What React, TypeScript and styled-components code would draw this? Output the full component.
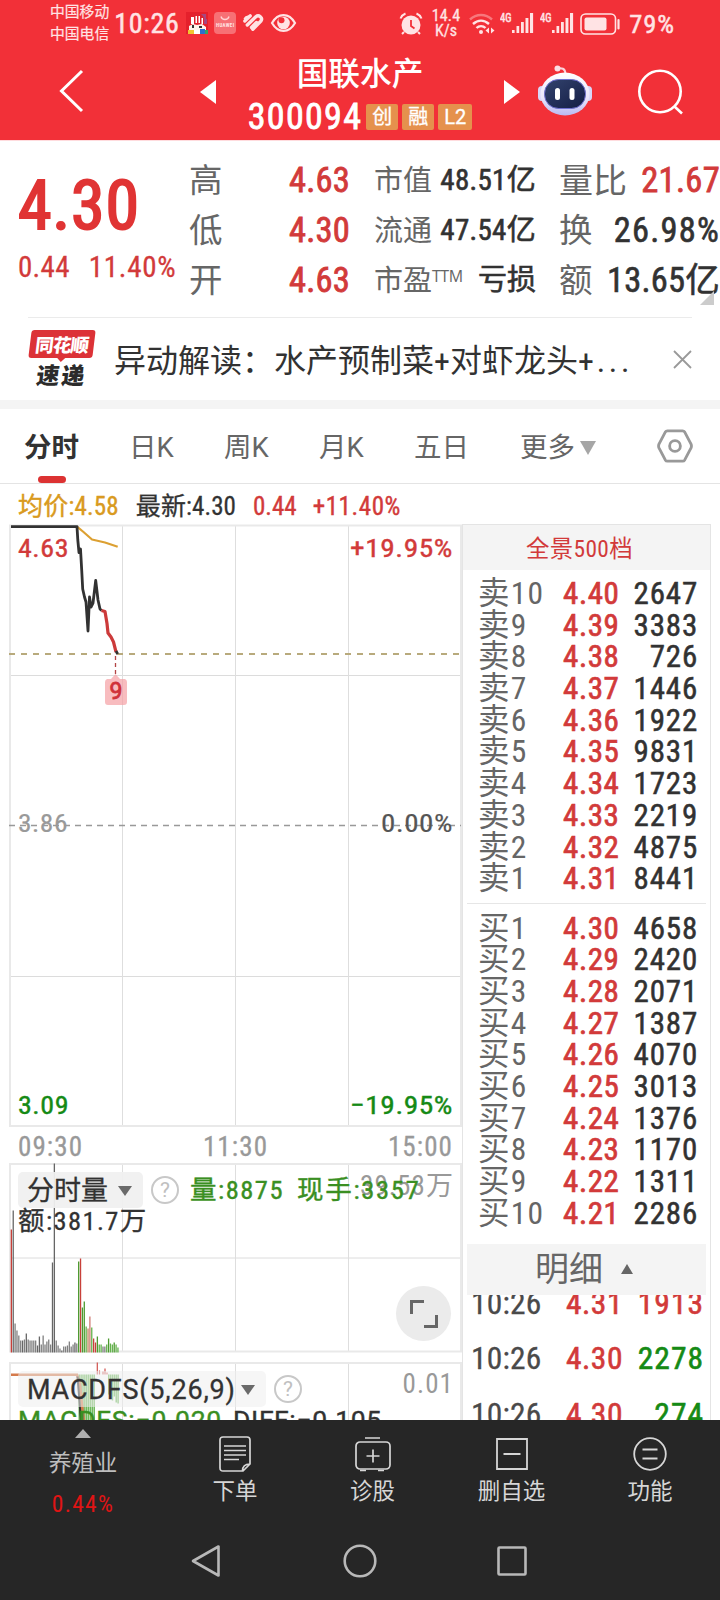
import React from 'react';
import styled, { createGlobalStyle } from 'styled-components';

const RED = '#d23a3a';
const INK = '#323232';
const GREY = '#666';
const GREEN = '#158a15';
const LINE = '#e9e9e9';

const Global = createGlobalStyle`
  * { box-sizing: border-box; }
  html, body { margin: 0; padding: 0; background: #fff; }
  body {
    width: 720px; height: 1600px; overflow: hidden;
    font-family: 'Roboto Condensed', Roboto, 'Noto Sans CJK SC', sans-serif;
    color: ${INK};
  }
  svg { display: block; flex: none; }
`;

type TxtProps = { $s: number; $c?: string; $lh?: number; $ls?: number; $b?: number; $w?: number };
const Txt = styled.span<TxtProps>`
  display: block;
  white-space: nowrap;
  font-size: ${p => p.$s}px;
  line-height: ${p => (p.$lh ? `${p.$lh}px` : '1.3')};
  letter-spacing: ${p => p.$ls ?? 0}px;
  font-weight: ${p => p.$w ?? 400};
  color: ${p => p.$c ?? INK};
  -webkit-text-stroke: ${p => p.$b ?? 0}px currentColor;
`;

const Screen = styled.div`
  width: 720px;
  height: 1600px;
  display: flex;
  flex-direction: column;
  overflow: hidden;
  background: #fff;
`;

/* ---------- header ---------- */
const Header = styled.header`
  height: 140px;
  background: #f23038;
  flex: none;
`;
const StatusBar = styled.div`
  height: 47px;
  display: flex;
  justify-content: space-between;
  padding: 0 45px 0 50px;
`;
const StatusGroup = styled.div`
  display: flex;
  align-items: center;
  height: 47px;
`;
const Stack = styled.div`
  display: flex;
  flex-direction: column;
  align-items: center;
  padding-bottom: 1px;
`;
const Gap = styled.i<{ $w: number }>`
  width: ${p => p.$w}px;
  flex: none;
`;
const TitleBar = styled.div`
  height: 93px;
  display: flex;
`;
const NavCell = styled.div<{ $w: number; $l?: number; $t: number }>`
  width: ${p => p.$w}px;
  padding: ${p => p.$t}px 0 0 ${p => p.$l ?? 0}px;
  flex: none;
`;
const TitleBlock = styled.div`
  width: 240px;
  padding-top: 7px;
  display: flex;
  flex-direction: column;
  align-items: center;
`;
const CodeRow = styled.div`
  display: flex;
  align-items: center;
  gap: 4px;
`;
const Tag = styled.span<{ $w: number }>`
  width: ${p => p.$w}px;
  height: 26px;
  border-radius: 2px;
  background: #e5914d;
  color: #fff;
  font: 400 20px/26px Roboto, 'Noto Sans CJK SC', sans-serif;
  -webkit-text-stroke: 0.3px currentColor;
  text-align: center;
`;

/* ---------- quote ---------- */
const Quote = styled.section`
  position: relative;
  height: 177px;
  border-top: 1px solid #ffdcde;
  display: flex;
  flex: none;
`;
const LastPrice = styled.div`
  width: 189px;
  padding: 26px 0 0 18px;
`;
const Changes = styled.div`
  display: flex;
  gap: 19px;
`;
const QuoteCol = styled.div<{ $ml: number; $w: number }>`
  width: ${p => p.$w}px;
  margin-left: ${p => p.$ml}px;
  padding-top: 13.5px;
`;
const QuoteRow = styled.div`
  display: flex;
  justify-content: space-between;
  height: 50px;
`;
const Sup = styled.sup`
  font: 400 16px/1 'Open Sans', sans-serif;
  letter-spacing: -0.5px;
  vertical-align: 9px;
`;
const Corner = styled.i`
  position: absolute;
  right: 6px;
  bottom: 12px;
  border: 7px solid transparent;
  border-right-color: #ccc;
  border-bottom-color: #ccc;
`;

/* ---------- news ---------- */
const News = styled.section`
  height: 83px;
  margin: 0 28px;
  border-top: 1px solid #ebebeb;
  display: flex;
  align-items: center;
  flex: none;
`;
const NewsLogo = styled.div`
  width: 68px;
  height: 58px;
  display: flex;
  flex-direction: column;
  align-items: center;
  margin-right: 18px;
`;
const LogoTop = styled.div`
  position: relative;
  width: 64px;
  height: 28px;
  border-radius: 3px;
  background: #dc3237;
  transform: skewX(-7deg);
  color: #fff;
  font: 900 18.5px/28px 'Noto Sans CJK SC', sans-serif;
  letter-spacing: -0.8px;
  text-align: center;
  white-space: nowrap;
  &::after {
    content: '';
    position: absolute;
    left: 28px;
    top: 27px;
    border: 5px solid transparent;
    border-top-color: #dc3237;
    border-bottom: 0;
  }
`;
const LogoBottom = styled.div`
  transform: skewX(-7deg);
  font: 900 23px/26px 'Noto Sans CJK SC', sans-serif;
  letter-spacing: 2px;
  padding-top: 3px;
  color: #2b2b2b;
`;
const Headline = styled.span`
  padding-top: 3px;
  font-size: 32px;
  line-height: 60px;
  white-space: nowrap;
`;
const Ellipsis = styled.span`
  font-size: 32px;
  letter-spacing: 3.6px;
  margin-left: 3px;
`;
const Grow = styled.i`
  flex: 1;
`;
const Band = styled.div`
  height: 9px;
  background: #f4f4f4;
  flex: none;
`;

/* ---------- tabs ---------- */
const Tabs = styled.nav`
  height: 75px;
  border-bottom: 1px solid #e4e4e4;
  display: flex;
  flex: none;
  padding-left: 24px;
`;
const Tab = styled.div<{ $w: number; $on?: boolean }>`
  position: relative;
  width: ${p => p.$w}px;
  font-family: Roboto, 'Noto Sans CJK SC', sans-serif;
  font-size: 27.5px;
  line-height: 78px;
  white-space: nowrap;
  color: ${p => (p.$on ? INK : GREY)};
  font-weight: ${p => (p.$on ? 700 : 400)};
  display: flex;
  align-items: center;
  height: 78px;
  gap: 5px;
  &::after {
    content: '';
    display: ${p => (p.$on ? 'block' : 'none')};
    position: absolute;
    left: 14px;
    top: 67px;
    width: 28px;
    height: 7px;
    border-radius: 4px;
    background: #dc3232;
  }
`;
const SettingsCell = styled.div`
  height: 74px;
  display: flex;
  align-items: center;
`;
const Caret = styled.i<{ $w: number; $h: number; $c: string; $up?: boolean }>`
  width: 0;
  height: 0;
  flex: none;
  border-left: ${p => p.$w / 2}px solid transparent;
  border-right: ${p => p.$w / 2}px solid transparent;
  border-${p => (p.$up ? 'bottom' : 'top')}: ${p => p.$h}px solid ${p => p.$c};
`;
const InfoLine = styled.div`
  height: 40px;
  padding: 7px 0 0 18px;
  display: flex;
  align-items: center;
  flex: none;
`;

/* ---------- body ---------- */
const Body = styled.main`
  height: 896px;
  display: flex;
  overflow: hidden;
  flex: none;
`;
const ChartCol = styled.div`
  width: 462px;
  padding-left: 9px;
  flex: none;
`;
const Axis = styled.div`
  height: 36px;
  padding: 3px 9px 0 9px;
  display: flex;
  justify-content: space-between;
`;
const Panel = styled.div<{ $h: number; $mb?: number }>`
  position: relative;
  height: ${p => p.$h}px;
  margin-bottom: ${p => p.$mb ?? 0}px;
`;
const Legend = styled.div`
  position: absolute;
  left: 9px;
  top: 9px;
  width: 438px;
`;
const LegendRow = styled.div<{ $h: number }>`
  height: ${p => p.$h}px;
  display: flex;
  align-items: center;
`;
const Chip = styled.div<{ $w: number; $bg: string; $ls?: number }>`
  width: ${p => p.$w}px;
  height: 36px;
  border-radius: 5px;
  background: ${p => p.$bg};
  display: flex;
  align-items: center;
  justify-content: space-between;
  padding: 2px 11px 0 9px;
  flex: none;
  font: 400 27px/34px Roboto, 'Noto Sans CJK SC', sans-serif;
  letter-spacing: ${p => p.$ls ?? 0}px;
  white-space: nowrap;
  -webkit-text-stroke: 0.3px currentColor;
`;
const Help = styled.span`
  width: 28px;
  height: 28px;
  margin: 0 0 0 8px;
  border: 2px solid #c8c8c8;
  border-radius: 50%;
  color: #c0c0c0;
  font: 400 21px/25px Roboto, sans-serif;
  text-align: center;
  flex: none;
`;
const PanelMax = styled.span<{ $t: number }>`
  position: absolute;
  right: 8px;
  top: ${p => p.$t}px;
  font-size: 27px;
  line-height: 32px;
  letter-spacing: 1.1px;
  color: #999;
`;
const WideTxt = styled.span<{ $c: string; $ls: number }>`
  font: 400 26.5px/26px Roboto, sans-serif;
  color: ${p => p.$c};
  letter-spacing: ${p => p.$ls}px;
  white-space: nowrap;
  -webkit-text-stroke: 0.4px currentColor;
`;
const Expand = styled.div`
  position: absolute;
  right: 11px;
  bottom: 11px;
  width: 55px;
  height: 55px;
  border-radius: 50%;
  background: #ebebeb;
  display: flex;
  align-items: center;
  justify-content: center;
`;

/* ---------- order book ---------- */
const Book = styled.aside`
  width: 249px;
  border: 1px solid #e4e4e4;
  border-bottom: 0;
  display: flex;
  flex-direction: column;
  overflow: hidden;
`;
const BookHead = styled.div`
  height: 45px;
  background: #f4f4f4;
  flex: none;
  text-align: center;
  padding: 1px 14px 0 0;
`;
const BookSide = styled.div<{ $mt: number }>`
  margin-top: ${p => p.$mt}px;
  height: 317px;
  display: flex;
  flex-direction: column;
  flex: none;
`;
const BookRow = styled.div`
  height: 31.7px;
  display: grid;
  grid-template-columns: 85px 62px 1fr;
  padding: 0 12px 0 15px;
`;
const Rule = styled.div`
  height: 1px;
  margin: 8px 4px 0;
  background: #e6e6e6;
  flex: none;
`;
const DetailHead = styled.div`
  height: 51px;
  margin: 14px 4px 0;
  background: #f4f4f4;
  display: flex;
  align-items: center;
  justify-content: center;
  gap: 18px;
  flex: none;
  padding-right: 5px;
`;
const Ticks = styled.div`
  height: 127px;
  overflow: hidden;
  display: flex;
  flex-direction: column;
`;
const Tick = styled.div<{ $first?: boolean }>`
  height: 55.5px;
  flex: none;
  margin-top: ${p => (p.$first ? -19 : 0)}px;
  display: grid;
  grid-template-columns: 95px 60px 1fr;
  padding: 0 6px 0 8px;
`;
const Right = styled.div`
  display: flex;
  justify-content: flex-end;
`;

/* ---------- bottom ---------- */
const Bottom = styled.footer`
  height: 180px;
  background: #262626;
  flex: none;
`;
const Menu = styled.div`
  display: grid;
  grid-template-columns: 166px 138px 137px 141px 136px;
  height: 102px;
`;
const MenuItem = styled.div<{ $t: number }>`
  display: flex;
  flex-direction: column;
  align-items: center;
  padding-top: ${p => p.$t}px;
`;
const IconSlot = styled.div`
  height: 37px;
  display: flex;
  align-items: center;
  margin-bottom: 4px;
`;
const SystemNav = styled.div`
  height: 78px;
  display: flex;
  align-items: center;
  padding: 0 0 0 190px;
  gap: 120.5px;
`;

const P = '#ffe3e4';

const Signal = () => (
  <svg width="34" height="24" viewBox="0 0 34 24" fill={P}>
    <text x="0" y="10" fontSize="12" textLength="11.5" lengthAdjust="spacingAndGlyphs" stroke={P} strokeWidth=".5">4G</text>
    <rect x="12" y="18" width="2.600" height="3" /><rect x="16.500" y="14" width="2.700" height="7" />
    <rect x="21" y="10" width="2.800" height="11" /><rect x="25.500" y="6" width="2.900" height="15" />
    <rect x="30" y="1" width="3.100" height="20" />
  </svg>
);

const StatusIcons = () => (
  <svg width="112" height="26" viewBox="185 11 112 26">
    <rect x="186" y="12" width="22" height="22" fill="#e5202c" />
    <path d="M201 14h5v5h-3zM204 19h3v5h-3z" fill="#a8467f" />
    <path d="M189 19q1-5 7-6 6 0 8 5l-1 7h-12z" fill="#e2222e" />
    <path d="M191 17h3v7h-3zM195.500 16h1.500v7h-1.500zM198.500 16h1.500v7h-1.500zM201.500 18h1.500v6h-1.500z" fill="#fff" />
    <path d="M189 26l4-2 4 1 5-1 4 3v3l-8 1-9-1z" fill="#fff4ec" />
    <path d="M192 25h2v3h-2zM199 26h3v2h-3z" fill="#333" />
    <rect x="188" y="30" width="6" height="4" fill="#f1c431" /><rect x="200" y="29" width="5" height="5" fill="#2c70cc" />
    <rect x="194" y="30" width="6" height="4" fill="#fff" /><rect x="205" y="30" width="3" height="4" fill="#35a363" />
    <rect x="214" y="12" width="22" height="22" rx="4" fill="#f77075" />
    <path d="M221 16.500c1 4 7 4 8 0" fill="none" stroke="#ffd5d6" strokeWidth="1.300" />
    <text x="216" y="26.500" fontSize="5" fontWeight="700" fill="#ffe3e4" textLength="18">HUAWEI</text>
    <g fill="none" stroke={P} strokeWidth="3.400" strokeLinecap="round">
      <path d="M244.800 21l5.500-5.200" /><path d="M247.300 25l8.500-8.300c3-2.500 7.500 1 5 4.500l-8 8" />
      <path d="M251.500 27.500l5-5" />
    </g>
    <path d="M243.500 18.500q2.500-4 6.500-2.500l-4 5z" fill={P} />
    <path d="M272 23c6-10.500 17-10.500 23 0c-6 10.500-17 10.500-23 0z" fill="none" stroke={P} strokeWidth="2.200" />
    <circle cx="283.500" cy="23" r="6.300" fill={P} /><circle cx="281.500" cy="20.300" r="3" fill="#f23038" />
  </svg>
);

const Alarm = () => (
  <svg width="24" height="24" viewBox="0 0 24 24">
    <circle cx="12" cy="13" r="9.500" fill={P} />
    <path d="M1.500 6.500c1-2.500 2.500-4 5-5M22.500 6.500c-1-2.500-2.500-4-5-5M5 20l-2 2M19 20l2 2" stroke={P} strokeWidth="2" fill="none" />
    <path d="M12 8v6l3.500 2.500" fill="none" stroke="#f23038" strokeWidth="1.800" />
  </svg>
);

const Wifi = () => (
  <svg width="26" height="22" viewBox="0 0 26 22" fill="none" stroke={P} strokeWidth="2.400">
    <path d="M1 6.500c6.500-6 15.500-6 22 0" opacity=".4" />
    <path d="M4 11c5-4.500 11-4.500 16 0" /><path d="M7.500 15c2.500-2.500 6.500-2.500 9 0" />
    <circle cx="12" cy="19" r="2" fill={P} stroke="none" />
    <path d="M20 14.500v6l-3.500-3zM22 14.500v6l3.500-3z" fill={P} stroke="none" />
  </svg>
);

const Battery = () => (
  <svg width="42" height="22" viewBox="0 0 42 22">
    <rect x="1" y="1" width="34.500" height="20" rx="4.500" fill="none" stroke={P} strokeWidth="1.600" />
    <rect x="4.500" y="4.500" width="22" height="13" rx="2" fill={P} />
    <path d="M38.500 7v8.500" stroke={P} strokeWidth="2.200" strokeLinecap="round" />
  </svg>
);

const Robot = () => (
  <svg width="56" height="52" viewBox="537 64 56 52">
    <defs>
      <linearGradient id="shell" x1="0" y1="0" x2="0" y2="1">
        <stop offset="0" stopColor="#fff" /><stop offset=".6" stopColor="#e9e4fa" /><stop offset="1" stopColor="#b9b9f2" />
      </linearGradient>
      <linearGradient id="visor" x1="0" y1="0" x2="1" y2="1">
        <stop offset="0" stopColor="#33436e" /><stop offset="1" stopColor="#141d44" />
      </linearGradient>
    </defs>
    <path d="M557 68.500c5-1 8 0 8.500 5" fill="none" stroke="#fbd3dc" strokeWidth="2" />
    <circle cx="557.500" cy="68.500" r="3" fill="#fbdde3" />
    <rect x="538" y="86" width="8" height="15" rx="4" fill="#d8d6f8" /><rect x="584" y="86" width="8" height="15" rx="4" fill="#d8d6f8" />
    <ellipse cx="565" cy="94" rx="24.500" ry="21.500" fill="url(#shell)" />
    <rect x="544.500" y="79.500" width="41" height="29" rx="14" fill="url(#visor)" stroke="#6f6fd0" strokeWidth="1" />
    <rect x="555" y="88" width="5" height="12" rx="2.500" fill="#fff" /><rect x="569.500" y="88" width="5" height="12" rx="2.500" fill="#fff" />
  </svg>
);

const Grid = ({ top, bottom, mids }: { top: number; bottom: number; mids: number[] }) => (
  <g fill="none">
    {mids.map(y => <path key={y} d={`M10 ${y}H461`} stroke="#dcdcdc" strokeWidth="1" />)}
    {[122.5, 235.5, 348.5].map(x => <path key={x} d={`M${x} ${top}V${bottom}`} stroke="#dedede" strokeWidth="1" />)}
    <rect x="10" y={top} width="451" height={bottom - top} stroke={LINE} strokeWidth="2" />
  </g>
);

type LabelProps = { x: number; y: number; w: number; c: string; b?: number; children: string };
const Label = ({ x, y, w, c, b = 0.4, children }: LabelProps) => (
  <text x={x} y={y} textLength={w} lengthAdjust="spacingAndGlyphs" fill={c} stroke={c} strokeWidth={b} fontSize="26.5" letterSpacing=".5">
    {children}
  </text>
);

const PriceChart = () => (
  <svg width="453" height="603" viewBox="9 524 453 603">
    <Grid top={525.5} bottom={1126} mids={[675.5, 976.5]} />
    <path d="M9 654H461" stroke="#b8aa7c" strokeWidth="2" strokeDasharray="6 6" />
    <path d="M9 825.500H461" stroke="#999" strokeWidth="1.600" strokeDasharray="6 5" />
    <path d="M115.500 656V676" stroke="#b34545" strokeWidth="1.300" strokeDasharray="4 3" />
    <path d="M107 679h4l4.500-5 4.500 5h5q2 1 2 3v20q0 3-3 3h-16q-3 0-3-3v-20q0-2 2-3z" fill="#f5a0a4" fillOpacity=".7" />
    <g fill="none" strokeWidth="2.800" strokeLinejoin="round">
      <path d="M77 526.700L83.500 532 92 539.500 105 542.500 117.700 546.700" stroke="#dca032" strokeWidth="2.200" />
      <path d="M11 526.700H77L77.800 540 79 552.500 80.500 549 81.700 570 82.700 589 84.500 597 86 602 88 631 89.500 597 91 607 93 603 95.700 580.500 98 600 100 609 101.500 610.500" stroke={INK} />
      <path d="M101.500 610.500L105 611.500 107 623.500 108 633 111 637 113.500 642 116 652" stroke="#cc3a3a" strokeWidth="3.200" />
      <path d="M116 651l1.700 3" stroke={INK} />
    </g>
    <Label x={18} y={557} w={51} c={RED}>4.63</Label>
    <Label x={350} y={557} w={103} c={RED}>+19.95%</Label>
    <Label x={18} y={832} w={50} c="#999" b={0.2}>3.86</Label>
    <Label x={381} y={832} w={72} c="#555" b={0.2}>0.00%</Label>
    <Label x={18} y={1114} w={51} c={GREEN}>3.09</Label>
    <Label x={350} y={1114} w={103} c={GREEN}>−19.95%</Label>
    <text x="109.500" y="699" fontSize="23" fontFamily="Roboto" fill="#d03038" stroke="#d03038" strokeWidth=".8">9</text>
  </svg>
);

const K = '#808080', D = '#666', G = '#4c9a2f', L = '#63b24c', R = '#c8403a', B = '#c08a5c';
const volume: [number, string][] = [
  [123, R], [142, D], [29, K], [22, K], [17, K], [12, K], [12, D], [13, K], [19, D], [13, K], [12, K], [12, K], [12, K], [12, K],
  [7, D], [16, D], [8, K], [17, K], [8, K], [11, K], [13, K], [8, K], [90, D], [189, D], [12, K], [7, K], [4, K], [2, D], [6, K], [6, K],
  [7, K], [11, K], [6, K], [8, K], [10, D], [9, K], [91, G], [94, R], [45, G], [51, G], [26, L], [24, B], [36, '#d07a72'], [25, L],
  [14, R], [10, R], [16, G], [8, L], [8, L], [6, K], [6, K], [8, L], [14, G], [9, L], [8, L], [10, G], [8, L], [5, L],
];

const VolumeChart = () => (
  <svg width="453" height="190" viewBox="9 1162.500 453 190">
    <Grid top={1163.5} bottom={1351} mids={[1257.5]} />
    {volume.map(([h, c], i) => (
      <rect key={i} x={10.7 + i * 1.87} y={1352 - h} width="1.300" height={h} fill={c} />
    ))}
  </svg>
);

const MacdChart = () => (
  <svg width="453" height="60" viewBox="9 1361.500 453 60">
    <Grid top={1362.5} bottom={1440} mids={[]} />
    {Array.from({ length: 9 }, (_, i) => (
      <rect key={i} x={78.5 + i * 1.87} y="1374" width="1.500" height="50" fill="#6db95b" />
    ))}
    {[20, 20, 26, 22, 28, 29].map((h, i) => (
      <rect key={i} x={108 + i * 1.87} y="1374" width="1.500" height={h} fill="#6db95b" />
    ))}
    <path d="M97.300 1362v12M99.500 1370v4M103 1371v3M105 1368v6M107 1372v2" stroke="#d0504c" strokeWidth="1.200" />
    <path d="M11 1374.300H77L80 1384 82 1405 84 1421" fill="none" stroke="#d57b4c" strokeWidth="2.600" />
    <path d="M77.500 1376L79 1395 81 1421" fill="none" stroke={INK} strokeWidth="2" />
  </svg>
);

const sells = [2647, 3383, 726, 1446, 1922, 9831, 1723, 2219, 4875, 8441];
const buys = [4658, 2420, 2071, 1387, 4070, 3013, 1376, 1170, 1311, 2286];

const Level = ({ label, price, vol }: { label: string; price: string; vol: number }) => (
  <BookRow>
    <Txt $s={31.5} $lh={31.7} $c={GREY} $ls={1.2}>{label}</Txt>
    <Txt $s={31} $lh={31.7} $c={RED} $b={0.7} $ls={0.6}>{price}</Txt>
    <Right><Txt $s={31} $lh={31.7} $b={0.5} $ls={0.8}>{vol}</Txt></Right>
  </BookRow>
);

const ticks = [
  { time: '10:26', price: '4.31', vol: '1913', c: RED },
  { time: '10:26', price: '4.30', vol: '2278', c: GREEN },
  { time: '10:26', price: '4.30', vol: '274', c: GREEN },
];

const M = '#d6d6d6';

export default function App() {
  return (
    <Screen>
      <Global />
      <Header>
        <StatusBar>
          <StatusGroup>
            <Stack>
              <Txt $s={14.8} $lh={22} $c={P} $b={0.2}>中国移动</Txt>
              <Txt $s={14.8} $lh={22} $c={P} $b={0.2}>中国电信</Txt>
            </Stack>
            <Gap $w={5} />
            <Txt $s={28} $lh={47} $c={P} $ls={0.7} $b={0.5}>10:26</Txt>
            <Gap $w={5} />
            <StatusIcons />
          </StatusGroup>
          <StatusGroup>
            <Alarm />
            <Gap $w={9} />
            <Stack>
              <Txt $s={16} $lh={15} $c={P} $b={0.3} $ls={0.2}>14.4</Txt>
              <Txt $s={16} $lh={15} $c={P} $b={0.3}>K/s</Txt>
            </Stack>
            <Gap $w={9} />
            <Wifi />
            <Gap $w={5} />
            <Signal />
            <Gap $w={6} />
            <Signal />
            <Gap $w={6} />
            <Battery />
            <Gap $w={7} />
            <Txt $s={26.5} $lh={47} $c={P} $ls={0.9} $b={0.5}>79%</Txt>
          </StatusGroup>
        </StatusBar>
        <TitleBar>
          <NavCell $w={200} $l={58} $t={22}>
            <svg width="26" height="44" viewBox="0 0 26 44" fill="none" stroke="#fff" strokeWidth="3"><path d="M24 2L3.500 22 24 42" /></svg>
          </NavCell>
          <NavCell $w={40} $t={33}>
            <svg width="16" height="24" viewBox="0 0 16 24" fill="#fff"><path d="M16 0v24L0 12z" /></svg>
          </NavCell>
          <TitleBlock>
            <Txt $s={31.7} $lh={42} $c="#fff" $w={500}>国联水产</Txt>
            <CodeRow>
              <Txt $s={36} $lh={42} $c="#fff" $ls={1.3} $b={0.8}>300094</Txt>
              <Tag $w={32}>创</Tag>
              <Tag $w={32}>融</Tag>
              <Tag $w={34}>L2</Tag>
            </CodeRow>
          </TitleBlock>
          <NavCell $w={57} $l={24} $t={33}>
            <svg width="16" height="24" viewBox="0 0 16 24" fill="#fff"><path d="M0 0v24L16 12z" /></svg>
          </NavCell>
          <NavCell $w={100} $t={17}><Robot /></NavCell>
          <NavCell $w={60} $t={22}>
            <svg width="48" height="46" viewBox="0 0 48 46" fill="none" stroke="#fff" strokeWidth="2.600"><circle cx="23" cy="22.500" r="20.700" /><path d="M37.500 37.500l7.500 7" /></svg>
          </NavCell>
        </TitleBar>
      </Header>

      <Quote>
        <LastPrice>
          <Txt $s={68} $lh={79} $c="#e03434" $b={2} $ls={0.8}>4.30</Txt>
          <Changes>
            <Txt $s={29} $lh={42} $c={RED} $b={0.3} $ls={0.3}>0.44</Txt>
            <Txt $s={29} $lh={42} $c={RED} $b={0.3} $ls={0.7}>11.40%</Txt>
          </Changes>
        </LastPrice>
        <QuoteCol $ml={0} $w={161}>
          {[['高', '4.63'], ['低', '4.30'], ['开', '4.63']].map(([k, v]) => (
            <QuoteRow key={k}>
              <Txt $s={33.5} $lh={52} $c={GREY}>{k}</Txt>
              <Txt $s={34.5} $lh={50} $c={RED} $b={0.8} $ls={0.2}>{v}</Txt>
            </QuoteRow>
          ))}
        </QuoteCol>
        <QuoteCol $ml={24} $w={162}>
          <QuoteRow>
            <Txt $s={29} $lh={52} $c={GREY}>市值</Txt>
            <Txt $s={29} $lh={50} $b={0.6} $ls={0.3}>48.51亿</Txt>
          </QuoteRow>
          <QuoteRow>
            <Txt $s={29} $lh={52} $c={GREY}>流通</Txt>
            <Txt $s={29} $lh={50} $b={0.6} $ls={0.3}>47.54亿</Txt>
          </QuoteRow>
          <QuoteRow>
            <Txt $s={29} $lh={52} $c={GREY}>市盈<Sup>TTM</Sup></Txt>
            <Txt $s={29} $lh={51} $b={0.6}>亏损</Txt>
          </QuoteRow>
        </QuoteCol>
        <QuoteCol $ml={23} $w={161}>
          <QuoteRow>
            <Txt $s={34} $lh={52} $c={GREY}>量比</Txt>
            <Txt $s={34.5} $lh={50} $c={RED} $b={0.8} $ls={0.3}>21.67</Txt>
          </QuoteRow>
          <QuoteRow>
            <Txt $s={33.5} $lh={52} $c={GREY}>换</Txt>
            <Txt $s={34.5} $lh={50} $b={0.6} $ls={1.2}>26.98%</Txt>
          </QuoteRow>
          <QuoteRow>
            <Txt $s={33.5} $lh={52} $c={GREY}>额</Txt>
            <Txt $s={34.5} $lh={50} $b={0.6} $ls={0.2}>13.65亿</Txt>
          </QuoteRow>
        </QuoteCol>
        <Corner />
      </Quote>

      <News>
        <NewsLogo>
          <LogoTop>同花顺</LogoTop>
          <LogoBottom>速递</LogoBottom>
        </NewsLogo>
        <Headline>异动解读：水产预制菜+对虾龙头+<Ellipsis>...</Ellipsis></Headline>
        <Grow />
        <svg width="19" height="19" viewBox="0 0 19 19" stroke="#999" strokeWidth="1.800"><path d="M1 1l17 17M18 1L1 18" /></svg>
      </News>
      <Band />

      <Tabs>
        <Tab $w={105} $on>分时</Tab>
        <Tab $w={95}>日K</Tab>
        <Tab $w={95}>周K</Tab>
        <Tab $w={95}>月K</Tab>
        <Tab $w={106}>五日</Tab>
        <Tab $w={137}>更多<Caret $w={17} $h={14} $c="#a6a6a6" /></Tab>
        <SettingsCell>
          <svg width="36" height="34" viewBox="0 0 38 36" fill="none" stroke="#999" strokeWidth="3" strokeLinejoin="round">
            <path d="M11 2h16q1.500 0 2.300 1.300L36 16q.8 2 0 4l-6.700 12.700Q28.500 34 27 34H11q-1.500 0-2.300-1.300L2 20q-.8-2 0-4L8.700 3.300Q9.500 2 11 2z" />
            <circle cx="19" cy="18" r="5.700" />
          </svg>
        </SettingsCell>
      </Tabs>

      <InfoLine>
        <Txt $s={25} $c="#d99a20" $b={0.4} $ls={0.2}>均价:4.58</Txt>
        <Gap $w={17} />
        <Txt $s={25} $b={0.3} $ls={0.1}>最新:4.30</Txt>
        <Gap $w={17} />
        <Txt $s={25} $c={RED} $b={0.4}>0.44</Txt>
        <Gap $w={16} />
        <Txt $s={25} $c={RED} $b={0.4} $ls={0.6}>+11.40%</Txt>
      </InfoLine>

      <Body>
        <ChartCol>
          <Panel $h={603}><PriceChart /></Panel>
          <Axis>
            {['09:30', '11:30', '15:00'].map(t => <Txt key={t} $s={27} $lh={34} $c="#999" $ls={1.1} $b={0.3}>{t}</Txt>)}
          </Axis>
          <Panel $h={189} $mb={10}>
            <VolumeChart />
            <PanelMax $t={7}>39.53万</PanelMax>
            <Legend>
              <LegendRow $h={36}>
                <Chip $w={125} $bg="rgba(240,240,240,.94)">分时量<Caret $w={14} $h={10} $c="#6a6a6a" /></Chip>
                <Help>?</Help>
                <Gap $w={11} />
                <Txt $s={26.5} $c="#3a8f22" $b={0.4} $ls={1.5}>量:8875</Txt>
                <Gap $w={13} />
                <Txt $s={26.5} $c="#3a8f22" $b={0.4} $ls={1.7}>现手:3357</Txt>
              </LegendRow>
              <LegendRow $h={26}><Txt $s={26.5} $b={0.3} $ls={1.4}>额:381.7万</Txt></LegendRow>
            </Legend>
            <Expand>
              <svg width="30" height="30" viewBox="0 0 30 30" fill="none" stroke="#666" strokeWidth="3"><path d="M2.500 15V2.500H15M27.500 16v11.500H15" /></svg>
            </Expand>
          </Panel>
          <Panel $h={60}>
            <MacdChart />
            <PanelMax $t={6}>0.01</PanelMax>
            <Legend>
              <LegendRow $h={36}>
                <Chip $w={248} $ls={0.8} $bg="rgba(238,238,238,.55)">MACDFS(5,26,9)<Caret $w={14} $h={10} $c="#6a6a6a" /></Chip>
                <Help>?</Help>
              </LegendRow>
              <LegendRow $h={26}>
                <WideTxt $c="#3a8f22" $ls={0.8}>MACDFS:−0.020</WideTxt>
                <Gap $w={11} />
                <WideTxt $c={INK} $ls={0.6}>DIFF:−0.105</WideTxt>
              </LegendRow>
            </Legend>
          </Panel>
        </ChartCol>

        <Book>
          <BookHead><Txt $s={23.4} $lh={46} $c={RED} $ls={0.4}>全景500档</Txt></BookHead>
          <BookSide $mt={8}>
            {sells.map((v, i) => <Level key={i} label={`卖${10 - i}`} price={(4.4 - i * 0.01).toFixed(2)} vol={v} />)}
          </BookSide>
          <Rule />
          <BookSide $mt={8.5}>
            {buys.map((v, i) => <Level key={i} label={`买${i + 1}`} price={(4.3 - i * 0.01).toFixed(2)} vol={v} />)}
          </BookSide>
          <DetailHead>
            <Txt $s={34} $lh={53} $c={GREY}>明细</Txt>
            <Caret $w={13} $h={10} $c="#666" $up />
          </DetailHead>
          <Ticks>
            {ticks.map((t, i) => (
              <Tick key={i} $first={i === 0}>
                <Txt $s={31.5} $lh={56} $c="#4a4a4a" $ls={0.2} $b={0.3}>{t.time}</Txt>
                <Txt $s={31.5} $lh={56} $c={RED} $b={0.6} $ls={0.5}>{t.price}</Txt>
                <Right><Txt $s={31.5} $lh={56} $c={t.c} $b={0.6} $ls={1}>{t.vol}</Txt></Right>
              </Tick>
            ))}
          </Ticks>
        </Book>
      </Body>

      <Bottom>
        <Menu>
          <MenuItem $t={9}>
            <Caret $w={17} $h={9} $c="#b0b0b0" $up />
            <Txt $s={22.8} $lh={52} $c="#bdbdbd">养殖业</Txt>
            <Txt $s={23.5} $lh={29} $c="#e01414" $ls={1.3}>0.44%</Txt>
          </MenuItem>
          <MenuItem $t={15}>
            <IconSlot>
              <svg width="32" height="36" viewBox="0 0 32 36" fill="none" stroke={M} strokeWidth="1.700"><path d="M4 1h24q3 0 3 3v24l-7 7H4q-3 0-3-3V4q0-3 3-3zM5 10h22M5 14.500h22M5 19h22M5 23.500h15M23.500 35q0-7 7.500-7" /></svg>
            </IconSlot>
            <Txt $s={22.5} $lh={30} $c={M}>下单</Txt>
          </MenuItem>
          <MenuItem $t={15}>
            <IconSlot>
              <svg width="36" height="36" viewBox="0 0 36 36" fill="none" stroke={M} strokeWidth="1.700"><rect x="1" y="6" width="34" height="27" rx="4" /><path d="M10 2h15M18 13.500v13M11.500 20h13M5 34.500h6M23 34.500h6" /></svg>
            </IconSlot>
            <Txt $s={22.5} $lh={30} $c={M}>诊股</Txt>
          </MenuItem>
          <MenuItem $t={15}>
            <IconSlot>
              <svg width="32" height="32" viewBox="0 0 32 32" fill="none" stroke={M} strokeWidth="1.800"><path d="M1 1h30v30H1zM7.500 16h17" /></svg>
            </IconSlot>
            <Txt $s={22.5} $lh={30} $c={M}>删自选</Txt>
          </MenuItem>
          <MenuItem $t={15}>
            <IconSlot>
              <svg width="34" height="34" viewBox="0 0 34 34" fill="none" stroke={M} strokeWidth="1.800"><circle cx="17" cy="17" r="15.800" /><path d="M9.500 12.500h15M9.500 21.500h15" /></svg>
            </IconSlot>
            <Txt $s={22.5} $lh={30} $c={M}>功能</Txt>
          </MenuItem>
        </Menu>
        <SystemNav>
          <svg width="32" height="34" viewBox="0 0 32 34" fill="none" stroke="#b8b8b8" strokeWidth="2.600" strokeLinejoin="round"><path d="M28.500 2.500v29L3 17z" /></svg>
          <svg width="34" height="34" viewBox="0 0 34 34" fill="none" stroke="#b8b8b8" strokeWidth="2.600"><circle cx="17" cy="17" r="15.300" /></svg>
          <svg width="30" height="30" viewBox="0 0 30 30" fill="none" stroke="#b8b8b8" strokeWidth="2.600"><rect x="1.500" y="1.500" width="27" height="27" rx="1" /></svg>
        </SystemNav>
      </Bottom>
    </Screen>
  );
}
